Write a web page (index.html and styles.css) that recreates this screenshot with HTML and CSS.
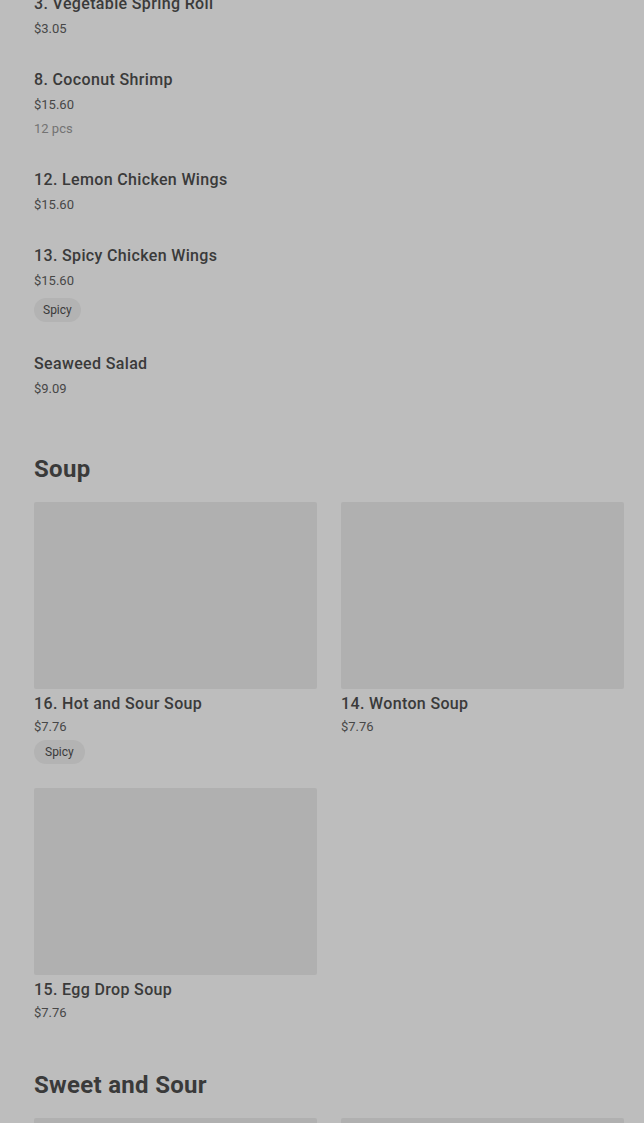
FILE: index.html
```html
<!DOCTYPE html>
<html lang="en">
<head>
<meta charset="utf-8">
<title>Menu</title>
<link rel="stylesheet" href="styles.css">
</head>
<body>
<main class="menu">
  <ul class="item-list">
    <li class="item">
      <div class="item-title">3. Vegetable Spring Roll</div>
      <div class="item-price">$3.05</div>
    </li>
    <li class="item">
      <div class="item-title">8. Coconut Shrimp</div>
      <div class="item-price">$15.60</div>
      <div class="item-note">12 pcs</div>
    </li>
    <li class="item">
      <div class="item-title">12. Lemon Chicken Wings</div>
      <div class="item-price">$15.60</div>
    </li>
    <li class="item">
      <div class="item-title">13. Spicy Chicken Wings</div>
      <div class="item-price">$15.60</div>
      <span class="badge">Spicy</span>
    </li>
    <li class="item">
      <div class="item-title">Seaweed Salad</div>
      <div class="item-price">$9.09</div>
    </li>
  </ul>

  <section class="section">
    <h2 class="section-title">Soup</h2>
    <div class="card-grid">
      <div class="card">
        <div class="card-img"></div>
        <div class="card-title">16. Hot and Sour Soup</div>
        <div class="card-price">$7.76</div>
        <span class="badge badge-card">Spicy</span>
      </div>
      <div class="card">
        <div class="card-img"></div>
        <div class="card-title">14. Wonton Soup</div>
        <div class="card-price">$7.76</div>
      </div>
      <div class="card">
        <div class="card-img"></div>
        <div class="card-title">15. Egg Drop Soup</div>
        <div class="card-price">$7.76</div>
      </div>
    </div>
  </section>

  <section class="section">
    <h2 class="section-title">Sweet and Sour</h2>
    <div class="card-grid">
      <div class="card">
        <div class="card-img"></div>
      </div>
      <div class="card">
        <div class="card-img"></div>
      </div>
    </div>
  </section>
</main>
</body>
</html>
```

FILE: styles.css
```css
html, body {
  margin: 0;
  padding: 0;
  background: #bdbdbd;
}

body {
  font-family: Roboto, "Liberation Sans", Arial, sans-serif;
  color: #3a3a3a;
  overflow: hidden;
}

.menu {
  padding: 0 20px 0 34px;
}

.item-list {
  list-style: none;
  margin: -22px 0 0 0;
  padding: 0;
}

.item {
  padding: 13px 0;
  display: flex;
  flex-direction: column;
  align-items: flex-start;
}

.item-title {
  font-size: 16px;
  font-weight: 500;
  line-height: 26px;
  letter-spacing: 0.35px;
  color: #3a3a3a;
}

.item-price {
  font-size: 13px;
  line-height: 24px;
  color: #474747;
}

.item-note {
  font-size: 13px;
  line-height: 24px;
  color: #737373;
}

.badge {
  display: inline-flex;
  align-items: center;
  height: 24px;
  padding: 0 9px;
  margin: 5px 0 3px;
  border-radius: 12px;
  background: #b3b3b3;
  font-size: 12px;
  color: #3a3a3a;
}

.section {
  padding-top: 39px;
}

.section-title {
  margin: 0 0 17px;
  font-size: 24px;
  line-height: 32px;
  font-weight: 700;
  letter-spacing: 0.3px;
  color: #3a3a3a;
}

.card-grid {
  display: grid;
  grid-template-columns: 1fr 1fr;
  column-gap: 24px;
  row-gap: 24px;
  margin-bottom: 6px;
}

.card {
  display: flex;
  flex-direction: column;
  align-items: flex-start;
}

.card-img {
  align-self: stretch;
  height: 187px;
  background: #b0b0b0;
  border-radius: 2px;
}

.card-title {
  margin-top: 3px;
  font-size: 16px;
  font-weight: 500;
  line-height: 24px;
  letter-spacing: 0.35px;
  color: #3a3a3a;
}

.card-price {
  font-size: 13px;
  line-height: 22px;
  color: #474747;
}

.badge-card {
  margin: 2px 0 0;
  padding: 0 11px;
}
```
